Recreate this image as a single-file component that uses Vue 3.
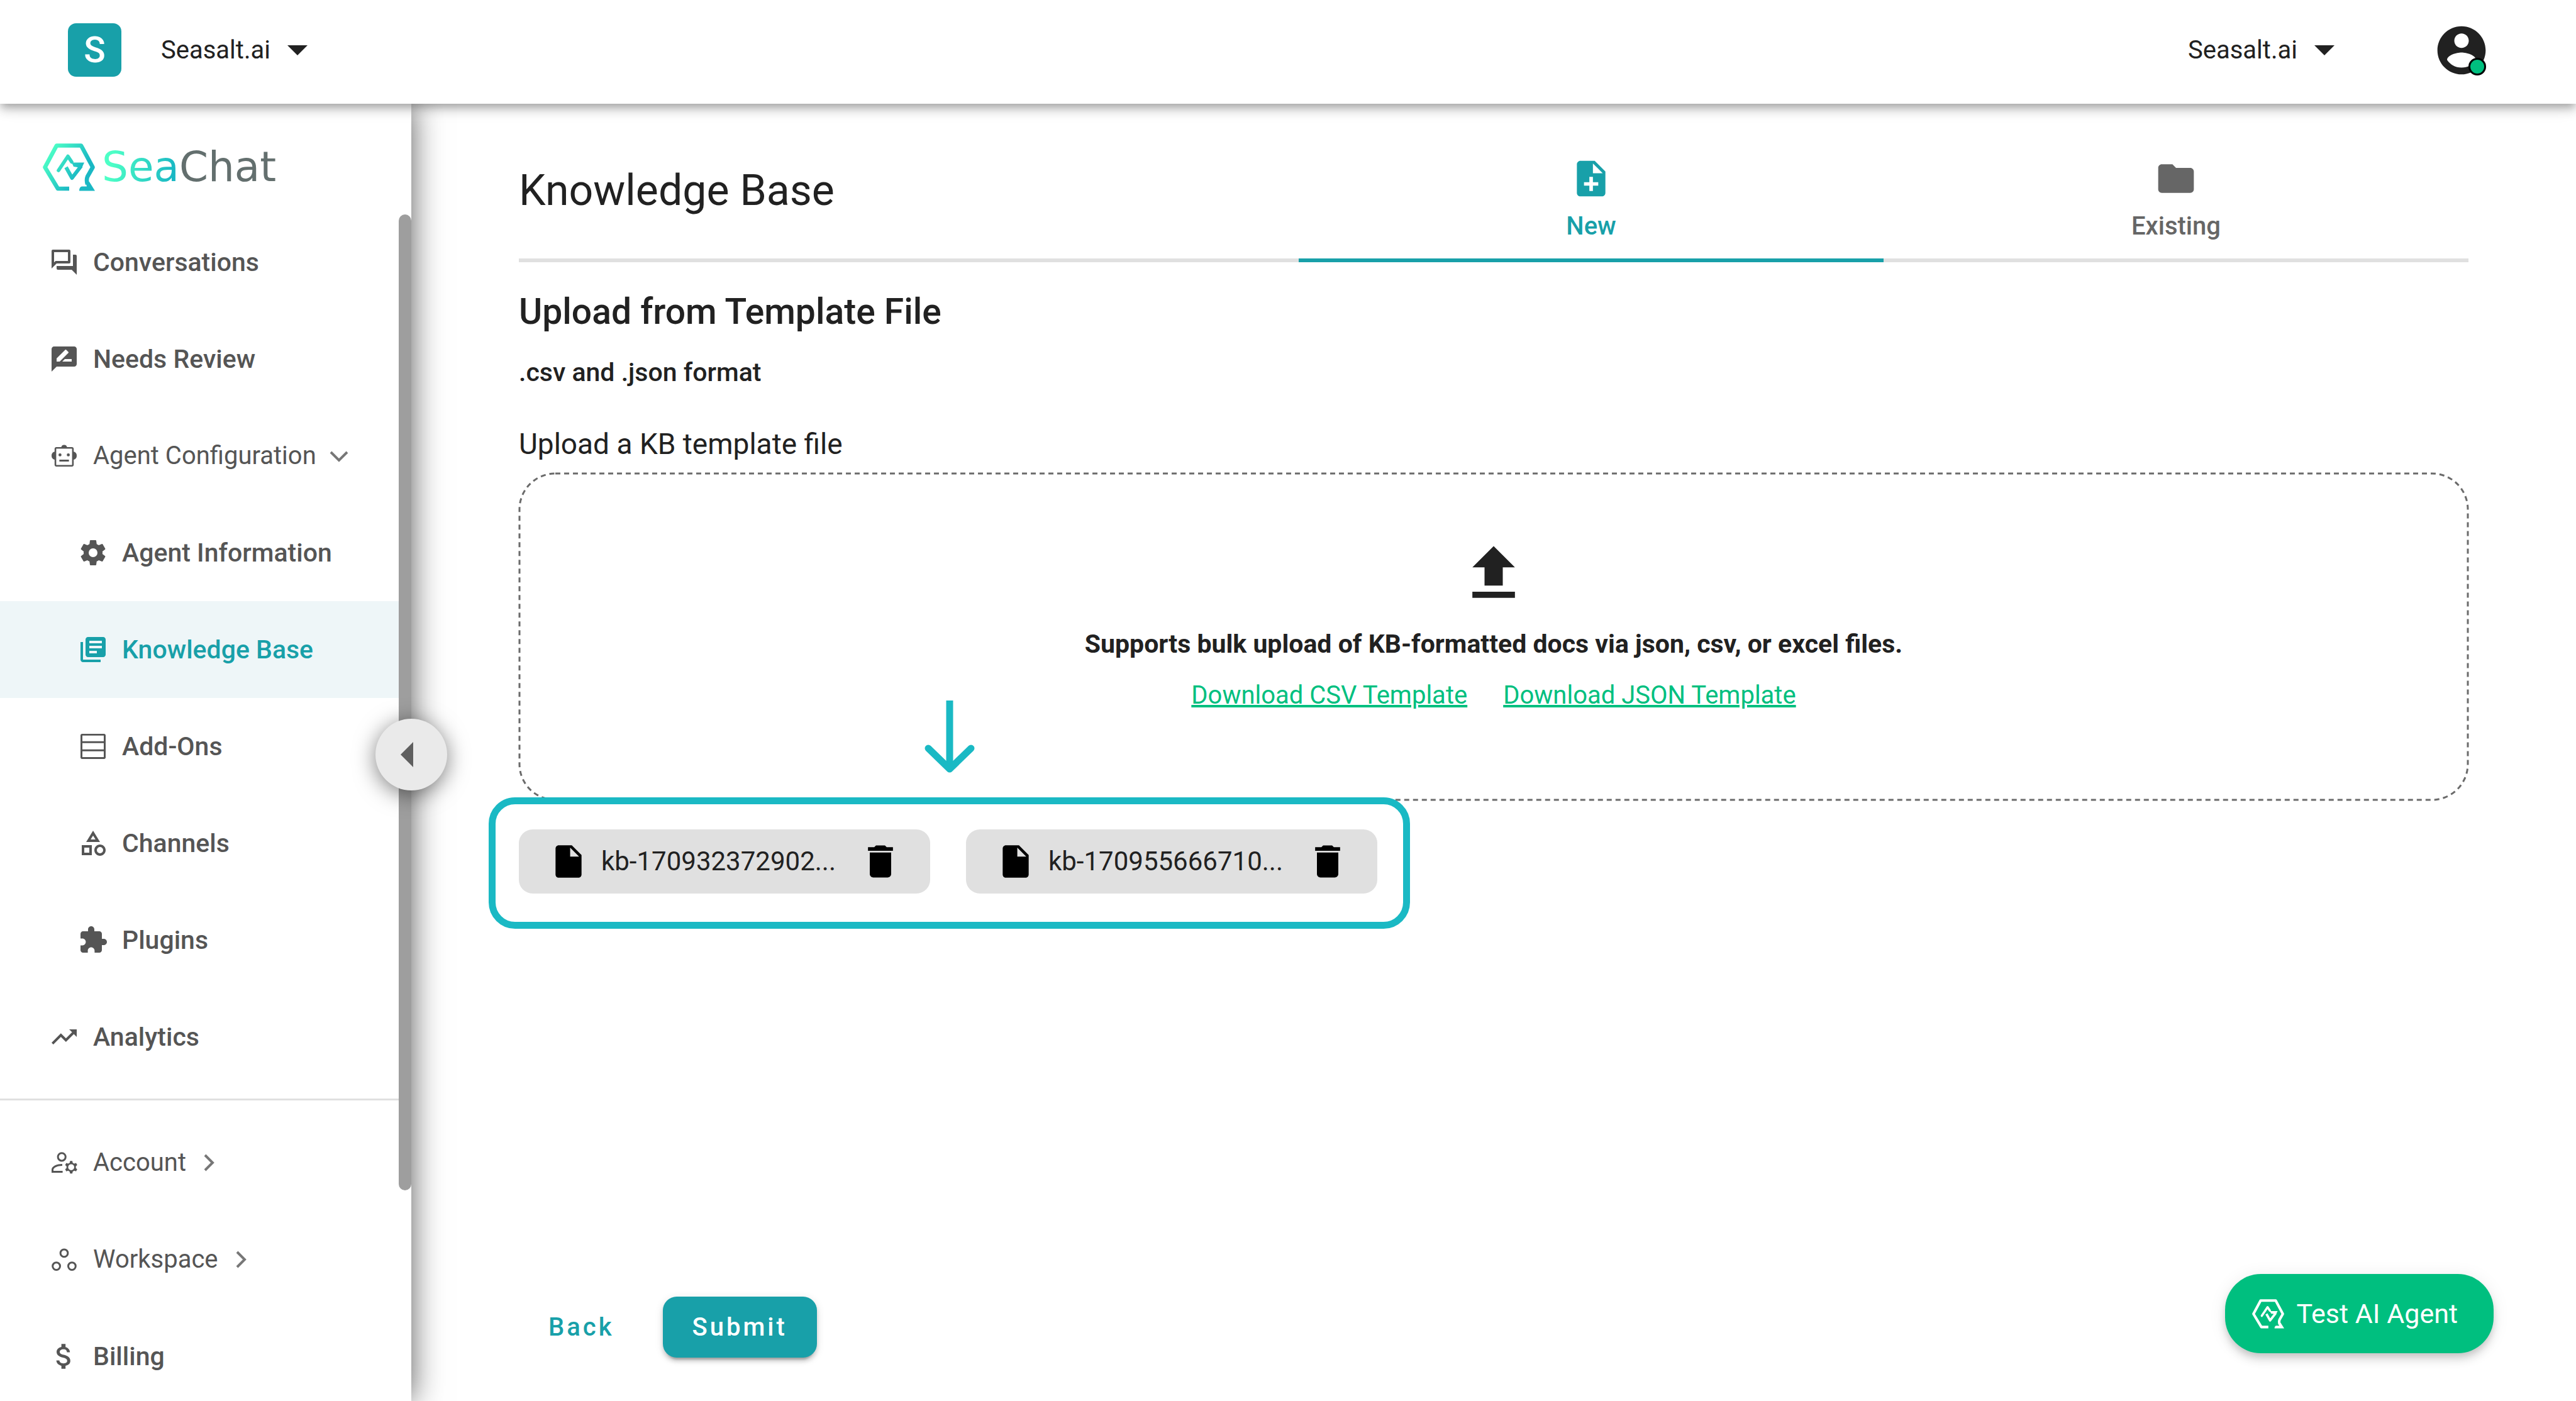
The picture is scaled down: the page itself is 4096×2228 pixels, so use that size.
<script setup>
import { ref } from 'vue'

const icons = {
  forum: 'M15 4v7H5.17L4 12.17V4h11m1-2H3a1 1 0 0 0-1 1v14l4-4h10a1 1 0 0 0 1-1V3a1 1 0 0 0-1-1m5 4h-2v9H6v2a1 1 0 0 0 1 1h11l4 4V7a1 1 0 0 0-1-1z',
  review: 'M20 2H4c-1.1 0-1.99.9-1.99 2L2 22l4-4h14c1.1 0 2-.9 2-2V4c0-1.1-.9-2-2-2zM6 14v-2.47l6.88-6.88c.2-.2.51-.2.71 0l1.77 1.77c.2.2.2.51 0 .71L8.47 14H6zm12 0h-7.5l2-2H18v2z',
  robot: 'M19.6 8.6V6.4c0-.8-.6-1.4-1.4-1.4h-3.9a2.4 2.4 0 0 0-4.6 0H5.8c-.8 0-1.4.6-1.4 1.4v2.2A3 3 0 0 0 2 11.8 3 3 0 0 0 4.4 15v4.1c0 .8.6 1.4 1.4 1.4h12.4c.8 0 1.4-.6 1.4-1.4V15a3 3 0 0 0 2.4-3.2 3 3 0 0 0-2.4-3.2zM18.3 19.2H5.7V6.3h12.6v12.9zM8.7 10a1.2 1.2 0 1 0 0 2.4 1.2 1.2 0 0 0 0-2.4zm6.6 0a1.2 1.2 0 1 0 0 2.4 1.2 1.2 0 0 0 0-2.4zM8.2 15v1.5h7.6V15z',
  cog: 'M12,15.5A3.5,3.5 0 0,1 8.5,12A3.5,3.5 0 0,1 12,8.5A3.5,3.5 0 0,1 15.5,12A3.5,3.5 0 0,1 12,15.5M19.43,12.97C19.47,12.65 19.5,12.33 19.5,12C19.5,11.67 19.47,11.34 19.43,11L21.54,9.37C21.73,9.22 21.78,8.95 21.66,8.73L19.66,5.27C19.54,5.05 19.27,4.96 19.05,5.05L16.56,6.05C16.04,5.66 15.5,5.32 14.87,5.07L14.5,2.42C14.46,2.18 14.25,2 14,2H10C9.75,2 9.54,2.18 9.5,2.42L9.13,5.07C8.5,5.32 7.96,5.66 7.44,6.05L4.95,5.05C4.73,4.96 4.46,5.05 4.34,5.27L2.34,8.73C2.21,8.95 2.27,9.22 2.46,9.37L4.57,11C4.53,11.34 4.5,11.67 4.5,12C4.5,12.33 4.53,12.65 4.57,12.97L2.46,14.63C2.27,14.78 2.21,15.05 2.34,15.27L4.34,18.73C4.46,18.95 4.73,19.03 4.95,18.95L7.44,17.94C7.96,18.34 8.5,18.68 9.13,18.93L9.5,21.58C9.54,21.82 9.75,22 10,22H14C14.25,22 14.46,21.82 14.5,21.58L14.87,18.93C15.5,18.67 16.04,18.34 16.56,17.94L19.05,18.95C19.27,19.03 19.54,18.95 19.66,18.73L21.66,15.27C21.78,15.05 21.73,14.78 21.54,14.63L19.43,12.97Z',
  library: 'M4 6H2v14c0 1.1.9 2 2 2h14v-2H4V6zm16-4H8c-1.1 0-2 .9-2 2v12c0 1.1.9 2 2 2h12c1.1 0 2-.9 2-2V4c0-1.1-.9-2-2-2zm-1 9H9V9h10v2zm-4 4H9v-2h6v2zm4-8H9V5h10v2z',
  rows: 'M3.2 2C2.5 2 2 2.5 2 3.2v17.6c0 .7.5 1.2 1.2 1.2h17.6c.7 0 1.2-.5 1.2-1.2V3.2c0-.7-.5-1.2-1.2-1.2H3.2zM3.500 3.400h17v4.500h-17zM3.500 9.400h17v5h-17zM3.500 15.900h17v4.600h-17z',
  category: 'M12 2l-5.500 9h11L12 2zm0 3.840L13.930 9h-3.870L12 5.840zM17.500 13c-2.490 0-4.500 2.010-4.500 4.500s2.010 4.500 4.500 4.500 4.500-2.010 4.500-4.500-2.010-4.500-4.500-4.500zm0 7a2.500 2.500 0 0 1 0-5 2.500 2.500 0 0 1 0 5zM3 21.500h8v-8H3v8zm2-6h4v4H5v-4z',
  puzzle: 'M20.5 11H19V7c0-1.1-.9-2-2-2h-4V3.500C13 2.120 11.880 1 10.500 1S8 2.120 8 3.500V5H4c-1.100 0-1.990.9-1.990 2v3.800H3.500c1.490 0 2.700 1.210 2.700 2.700s-1.210 2.700-2.700 2.700H2V20c0 1.100.9 2 2 2h3.800v-1.500c0-1.490 1.210-2.700 2.700-2.700 1.490 0 2.700 1.210 2.700 2.700V22H17c1.100 0 2-.9 2-2v-4h1.500c1.380 0 2.500-1.120 2.500-2.500S21.880 11 20.500 11z',
  trending: 'M16,6L18.29,8.29L13.41,13.17L9.41,9.17L2,16.59L3.41,18L9.41,12L13.41,16L19.71,9.71L22,12V6H16Z',
  account: 'M10.100 3.600a3.800 3.800 0 1 0 0 7.600 3.800 3.800 0 0 0 0-7.600zm0 1.500a2.300 2.300 0 1 1 0 4.600 2.300 2.300 0 0 1 0-4.600zM10.500 13c-4 0-8.500 1.600-8.500 4.600V20h8.800v-1.500H3.500v-.9c0-1.600 3.300-3.100 7-3.100zM16.700 10.600l-.3 1.500-1.200.7-1.500-.5-.9 1.600 1.100 1v1.400l-1.100 1 .9 1.600 1.500-.5 1.200.7.3 1.500h1.800l.3-1.500 1.200-.7 1.500.5.9-1.600-1.100-1v-1.400l1.100-1-.9-1.600-1.500.5-1.200-.7-.3-1.500zM17.600 13.200a2.400 2.400 0 1 1 0 4.800 2.400 2.400 0 0 1 0-4.800z',
  workspace: 'M12 3.200a3.700 3.700 0 1 0 0 7.400 3.700 3.700 0 0 0 0-7.400zm0 1.500a2.200 2.200 0 1 1 0 4.400 2.200 2.200 0 0 1 0-4.400zM5.800 13.600a3.700 3.700 0 1 0 0 7.400 3.700 3.700 0 0 0 0-7.400zm0 1.500a2.200 2.200 0 1 1 0 4.400 2.200 2.200 0 0 1 0-4.400zM18.200 13.600a3.700 3.700 0 1 0 0 7.400 3.700 3.700 0 0 0 0-7.400zm0 1.500a2.200 2.200 0 1 1 0 4.400 2.200 2.200 0 0 1 0-4.400z',
  dollar: 'M11.8 10.9c-2.27-.59-3-1.2-3-2.15 0-1.09 1.01-1.85 2.7-1.85 1.78 0 2.44.85 2.5 2.1h2.21c-.07-1.72-1.12-3.3-3.21-3.81V3h-3v2.16c-1.94.42-3.5 1.68-3.5 3.61 0 2.31 1.91 3.46 4.7 4.13 2.5.6 3 1.48 3 2.41 0 .69-.49 1.79-2.7 1.79-2.06 0-2.87-.92-2.98-2.1h-2.2c.12 2.19 1.76 3.42 3.68 3.83V21h3v-2.15c1.95-.37 3.5-1.5 3.5-3.55 0-2.84-2.43-3.81-4.7-4.4z',
  noteAdd: 'M14 2H6c-1.1 0-1.99.9-1.99 2L4 20c0 1.1.89 2 1.99 2H18c1.1 0 2-.9 2-2V8l-6-6zm2 14h-3v3h-2v-3H8v-2h3v-3h2v3h3v2zm-3-7V3.5L18.5 9H13z',
  folder: 'M10 4H4c-1.1 0-1.99.9-1.99 2L2 18c0 1.1.9 2 2 2h16c1.1 0 2-.9 2-2V8c0-1.1-.9-2-2-2h-8l-2-2z',
  upload: 'M9,16V10H5L12,3L19,10H15V16H9M5,20V18H19V20H5Z',
  file: 'M6 2c-1.1 0-1.99.9-1.99 2L4 20c0 1.1.89 2 1.99 2H18c1.1 0 2-.9 2-2V8l-6-6H6zm7 7V3.5L18.5 9H13z',
  trash: 'M6 19c0 1.1.9 2 2 2h8c1.1 0 2-.9 2-2V7H6v12zM19 4h-3.5l-1-1h-5l-1 1H5v2h14V4z',
  person: 'M12 2C6.48 2 2 6.48 2 12s4.48 10 10 10 10-4.48 10-10S17.52 2 12 2zm0 3c1.66 0 3 1.34 3 3s-1.34 3-3 3-3-1.34-3-3 1.34-3 3-3zm0 14.2c-2.5 0-4.71-1.28-6-3.22.03-1.99 4-3.08 6-3.08 1.99 0 5.97 1.09 6 3.08-1.29 1.94-3.5 3.22-6 3.22z',
}

const mainNav = [
  { label: 'Conversations', icon: 'forum' },
  { label: 'Needs Review', icon: 'review' },
  { label: 'Agent Configuration', icon: 'robot', group: 'down' },
  { label: 'Agent Information', icon: 'cog', sub: true },
  { label: 'Knowledge Base', icon: 'library', sub: true, active: true },
  { label: 'Add-Ons', icon: 'rows', sub: true },
  { label: 'Channels', icon: 'category', sub: true },
  { label: 'Plugins', icon: 'puzzle', sub: true },
  { label: 'Analytics', icon: 'trending' },
]

const accountNav = [
  { label: 'Account', icon: 'account', group: 'right' },
  { label: 'Workspace', icon: 'workspace', group: 'right' },
  { label: 'Billing', icon: 'dollar', box: '1 1 22 22' },
]

const navSections = [mainNav, accountNav]

const chevrons = {
  down: 'M5 12 L18 25 L31 12',
  right: 'M12 6 L24 18 L12 30',
}

const tabs = [
  { label: 'New', icon: 'noteAdd' },
  { label: 'Existing', icon: 'folder' },
]
const currentTab = ref('New')

const files = ref(['kb-170932372902...', 'kb-170955666710...'])
const removeFile = (name) => {
  files.value = files.value.filter((f) => f !== name)
}
</script>

<template>
  <div class="app">
    <header class="topbar">
      <span class="tile">S</span>
      <label class="picker">
        <select aria-label="Workspace"><option>Seasalt.ai</option></select>
        <svg class="caret" viewBox="0 0 32 16"><path d="M0 0h32L16 16z" /></svg>
      </label>
      <span class="spacer"></span>
      <label class="picker">
        <select aria-label="Organization"><option>Seasalt.ai</option></select>
        <svg class="caret" viewBox="0 0 32 16"><path d="M0 0h32L16 16z" /></svg>
      </label>
      <button class="avatar" type="button" aria-label="Profile">
        <svg viewBox="0 0 24 24"><path :d="icons.person" /></svg>
        <span class="status"></span>
      </button>
    </header>

    <div class="body">
      <aside class="sidebar">
        <a class="brand" href="#">
          <svg class="brand-mark" viewBox="0 0 83 76">
            <defs>
              <linearGradient id="mark" gradientUnits="userSpaceOnUse" x1="12" y1="10" x2="62" y2="44">
                <stop offset="0" stop-color="#4dffc6" />
                <stop offset="1" stop-color="#1ab8c4" />
              </linearGradient>
            </defs>
            <g fill="none" stroke="url(#mark)" stroke-linejoin="round">
              <path stroke-width="6.600" d="M42 72H24L3.500 38 22 3.500h39L79.500 38 71 53q-2 5 0 12" />
              <path stroke-width="5.600" stroke-linecap="round" d="M25 43 40 20.500l6 9" />
              <path stroke-width="6" d="M37 38l9.500 17L61 36" />
            </g>
            <g fill="url(#mark)">
              <path d="M46 30.500h20L62 39l-13-2z" />
              <path d="M74 61l9 14.500H58q0-6 4-7h8l-2-8z" />
            </g>
          </svg>
          <span class="wordmark"><span class="sea">Sea</span>Chat</span>
        </a>

        <div class="scroll">
          <nav>
            <ul v-for="(section, i) in navSections" :key="i" class="nav-list">
              <li v-for="item in section" :key="item.label">
                <a
                  href="#"
                  class="nav-item"
                  :class="{ sub: item.sub, active: item.active, group: item.group }"
                >
                  <svg class="nav-icon" :viewBox="item.box || '0 0 24 24'">
                    <path fill-rule="evenodd" :d="icons[item.icon]" />
                  </svg>
                  <span>{{ item.label }}</span>
                  <svg v-if="item.group" class="chevron" viewBox="0 0 36 36">
                    <path :d="chevrons[item.group]" />
                  </svg>
                </a>
              </li>
            </ul>
          </nav>
          <div class="thumb"></div>
        </div>

        <button class="collapse" type="button" aria-label="Collapse sidebar">
          <svg viewBox="0 0 20 40"><path d="M20 0v40L0 20z" /></svg>
        </button>
      </aside>

      <main class="content">
        <div class="heading">
          <h1>Knowledge Base</h1>
          <button
            v-for="tab in tabs"
            :key="tab.label"
            type="button"
            class="tab"
            :class="{ current: currentTab === tab.label }"
            @click="currentTab = tab.label"
          >
            <svg viewBox="0 0 24 24"><path :d="icons[tab.icon]" /></svg>
            <span>{{ tab.label }}</span>
          </button>
        </div>

        <h2>Upload from Template File</h2>
        <p class="formats">.csv and .json format</p>
        <label class="field-label" for="kb-file">Upload a KB template file</label>

        <div class="dropzone">
          <svg class="dashes" aria-hidden="true">
            <rect x="0" y="0" width="100%" height="100%" rx="57" />
          </svg>
          <input id="kb-file" class="file-input" type="file" />
          <svg class="upload-icon" viewBox="0 0 24 24"><path :d="icons.upload" /></svg>
          <p class="hint">Supports bulk upload of KB-formatted docs via json, csv, or excel files.</p>
          <div class="templates">
            <a href="#">Download CSV Template</a>
            <a href="#">Download JSON Template</a>
          </div>
        </div>

        <div class="files">
          <svg class="pointer" viewBox="0 0 80 115">
            <path d="M40 0v104" />
            <path stroke-linecap="round" stroke-linejoin="round" d="M6 76l34 33 34-33" />
          </svg>
          <div v-for="file in files" :key="file" class="chip">
            <svg class="chip-file" viewBox="0 0 24 24"><path :d="icons.file" /></svg>
            <span class="chip-name">{{ file }}</span>
            <button type="button" aria-label="Remove file" @click="removeFile(file)">
              <svg viewBox="0 0 24 24"><path :d="icons.trash" /></svg>
            </button>
          </div>
        </div>

        <div class="actions">
          <button type="button" class="back">Back</button>
          <button type="button" class="submit">Submit</button>
        </div>
      </main>
    </div>

    <button class="test-agent" type="button">
      <svg viewBox="0 0 83 76">
        <g fill="none" stroke="#fff" stroke-linejoin="round">
          <path stroke-width="6.600" d="M42 72H24L3.500 38 22 3.500h39L79.500 38 71 53q-2 5 0 12" />
          <path stroke-width="5.600" stroke-linecap="round" d="M25 43 40 20.500l6 9" />
          <path stroke-width="6" d="M37 38l9.500 17L61 36" />
        </g>
        <g fill="#fff">
          <path d="M46 30.500h20L62 39l-13-2z" />
          <path d="M74 61l9 14.500H58q0-6 4-7h8l-2-8z" />
        </g>
      </svg>
      <span>Test AI Agent</span>
    </button>
  </div>
</template>

<style>
body {
  margin: 0;
  background: #fff;
}
</style>

<style scoped>
* {
  box-sizing: border-box;
}

.app {
  position: relative;
  display: flex;
  flex-direction: column;
  height: 100vh;
  overflow: hidden;
  font-family: Roboto, 'Liberation Sans', sans-serif;
  font-size: 40px;
  line-height: 56px;
  color: #212121;
}

button {
  border: 0;
  padding: 0;
  background: none;
  font: inherit;
  color: inherit;
  cursor: pointer;
}

svg {
  display: block;
  flex: none;
  fill: currentColor;
}

h1,
h2,
p,
ul {
  margin: 0;
  padding: 0;
}

/* Top bar */
.topbar {
  position: relative;
  z-index: 3;
  flex: none;
  display: flex;
  align-items: center;
  height: 165px;
  padding: 0 136px 6px 108px;
  background: #fff;
  box-shadow: 0 6px 11px -3px rgba(0, 0, 0, 0.2), 0 11px 14px rgba(0, 0, 0, 0.14),
    0 3px 28px rgba(0, 0, 0, 0.12);
}

.tile {
  display: flex;
  align-items: center;
  justify-content: center;
  width: 85px;
  height: 85px;
  margin-right: 63px;
  border-radius: 13px;
  background: #18a0a9;
  color: #fff;
  font-size: 57px;
  font-weight: 500;
}

.picker {
  display: flex;
  align-items: center;
  gap: 27px;
}

.picker select {
  appearance: none;
  border: 0;
  padding: 0;
  background: none;
  font: inherit;
  color: inherit;
}

.caret {
  width: 32px;
  height: 16px;
}

.spacer {
  flex: 1;
}

.avatar {
  position: relative;
  margin-left: 156px;
}

.avatar svg {
  width: 92px;
  height: 92px;
}

.status {
  position: absolute;
  right: 7px;
  bottom: 6px;
  width: 28px;
  height: 28px;
  border: 3px solid #000;
  border-radius: 50%;
  background: #00bf7f;
}

/* Sidebar */
.body {
  flex: 1;
  display: flex;
  min-height: 0;
}

.sidebar {
  position: relative;
  z-index: 2;
  flex: none;
  display: flex;
  flex-direction: column;
  width: 654px;
  background: #fff;
  box-shadow: 0 0 48px rgba(0, 0, 0, 0.65);
  color: #555;
}

.brand {
  flex: none;
  display: flex;
  align-items: center;
  gap: 11px;
  height: 175px;
  padding: 26px 0 0 68px;
  color: #636f6e;
  text-decoration: none;
}

.brand-mark {
  width: 83px;
  height: 76px;
}

.wordmark {
  font-family: 'DejaVu Sans', sans-serif;
  font-size: 66px;
}

.sea {
  background: linear-gradient(100deg, #4dffc6 15%, #1ab8c4 90%);
  background-clip: text;
  -webkit-background-clip: text;
  color: transparent;
}

.scroll {
  position: relative;
  flex: 1;
  min-height: 0;
  padding-right: 20px;
  overflow: hidden;
}

.thumb {
  position: absolute;
  top: 1px;
  right: 0;
  width: 20px;
  height: 82.2%;
  border-radius: 10px;
  background: #9e9e9e;
}

.nav-list {
  list-style: none;
}

.nav-list + .nav-list {
  margin-top: 21px;
  padding-top: 22px;
  border-top: 3px solid #e0e0e0;
}

.nav-item {
  display: flex;
  align-items: center;
  height: 154px;
  padding-left: 78px;
  color: inherit;
  font-size: 41px;
  font-weight: 500;
  text-decoration: none;
}

.nav-item.sub {
  padding-left: 124px;
}

.nav-item.group {
  font-size: 40px;
  font-weight: 400;
}

.nav-item.active {
  background: #eef6f8;
  color: #18a0a9;
}

.nav-icon {
  width: 48px;
  height: 48px;
  margin-right: 22px;
}

.chevron {
  width: 36px;
  height: 36px;
  margin-left: 18px;
  fill: none;
  stroke: #777;
  stroke-width: 4;
}

.collapse {
  position: absolute;
  top: 978px;
  right: -57px;
  display: flex;
  align-items: center;
  width: 114px;
  height: 114px;
  padding-left: 40px;
  border-radius: 50%;
  background: #eaeaea;
  box-shadow: 0 6px 34px rgba(0, 0, 0, 0.5);
}

.collapse svg {
  width: 20px;
  height: 40px;
  fill: #5f5f5f;
}

/* Page content */
.content {
  flex: 1;
  display: flex;
  flex-direction: column;
  min-width: 0;
  padding: 61px 171px 69px;
}

.heading {
  display: grid;
  grid-template-columns: 4fr 3fr 3fr;
}

h1 {
  padding-top: 37px;
  border-bottom: 6px solid #e0e0e0;
  font-size: 68px;
  font-weight: 400;
  line-height: 80px;
}

.tab {
  display: flex;
  flex-direction: column;
  align-items: center;
  gap: 14px;
  padding: 24px 0 23px;
  border-bottom: 6px solid #e0e0e0;
  color: #666;
  font-weight: 500;
}

.tab.current {
  border-color: #18a0a9;
  color: #18a0a9;
}

.tab svg {
  width: 68px;
  height: 68px;
}

h2 {
  margin-top: 39px;
  font-size: 57px;
  font-weight: 500;
  line-height: 80px;
}

.formats {
  margin-top: 28px;
  font-size: 41px;
  font-weight: 500;
}

.field-label {
  align-self: flex-start;
  margin-top: 54px;
  font-size: 46px;
  line-height: 64px;
}

.dropzone {
  position: relative;
  display: flex;
  flex-direction: column;
  align-items: center;
  gap: 26px;
  margin-top: 14px;
  padding: 102px 0 139px;
}

.dashes {
  position: absolute;
  inset: 1px;
  width: calc(100% - 2px);
  height: calc(100% - 2px);
  overflow: visible;
  fill: none;
  stroke: #6b6b6b;
  stroke-width: 3;
  stroke-dasharray: 8 6;
  pointer-events: none;
}

.file-input {
  position: absolute;
  width: 1px;
  height: 1px;
  overflow: hidden;
  clip-path: inset(50%);
}

.upload-icon {
  width: 116px;
  height: 116px;
}

.hint {
  font-size: 41px;
  font-weight: 700;
}

.templates {
  display: flex;
  gap: 57px;
}

.templates a {
  color: #00bf7f;
}

.files {
  position: relative;
  align-self: flex-start;
  display: flex;
  gap: 57px;
  margin: -5px 0 0 -48px;
  padding: 40px 41px 45px 37px;
  border: 11px solid #1ab9c4;
  border-radius: 42px;
}

.pointer {
  position: absolute;
  bottom: calc(100% + 50px);
  left: calc(50% - 40px);
  width: 80px;
  height: 115px;
  fill: none;
  stroke: #1ab9c4;
  stroke-width: 11;
}

.chip {
  display: flex;
  align-items: center;
  width: 654px;
  height: 102px;
  padding: 0 45px 0 48px;
  border-radius: 22px;
  background: #e0e0e0;
  font-size: 42px;
}

.chip-file {
  width: 62px;
  height: 62px;
  margin-right: 21px;
  fill: #000;
}

.chip-name {
  flex: 1;
}

.chip button svg {
  width: 68px;
  height: 68px;
  fill: #000;
}

.actions {
  display: flex;
  gap: 30px;
  margin-top: auto;
}

.actions button {
  height: 97px;
  padding: 0 47px;
  border-radius: 22px;
  color: #18a0a9;
  font-weight: 500;
  letter-spacing: 4px;
}

.actions .submit {
  background: #18a0a9;
  box-shadow: 0 9px 3px -6px rgba(0, 0, 0, 0.2), 0 6px 6px rgba(0, 0, 0, 0.14),
    0 3px 14px rgba(0, 0, 0, 0.12);
  color: #fff;
}

.test-agent {
  position: absolute;
  right: 131px;
  bottom: 76px;
  z-index: 4;
  display: flex;
  align-items: center;
  gap: 19px;
  height: 126px;
  padding: 0 57px 0 43px;
  border-radius: 57px;
  background: #00bf7f;
  box-shadow: 0 6px 11px -3px rgba(0, 0, 0, 0.12), 0 11px 14px rgba(0, 0, 0, 0.1),
    0 3px 28px rgba(0, 0, 0, 0.08);
  color: #fff;
  font-size: 43px;
}

.test-agent svg {
  width: 51px;
  height: 47px;
}
</style>
